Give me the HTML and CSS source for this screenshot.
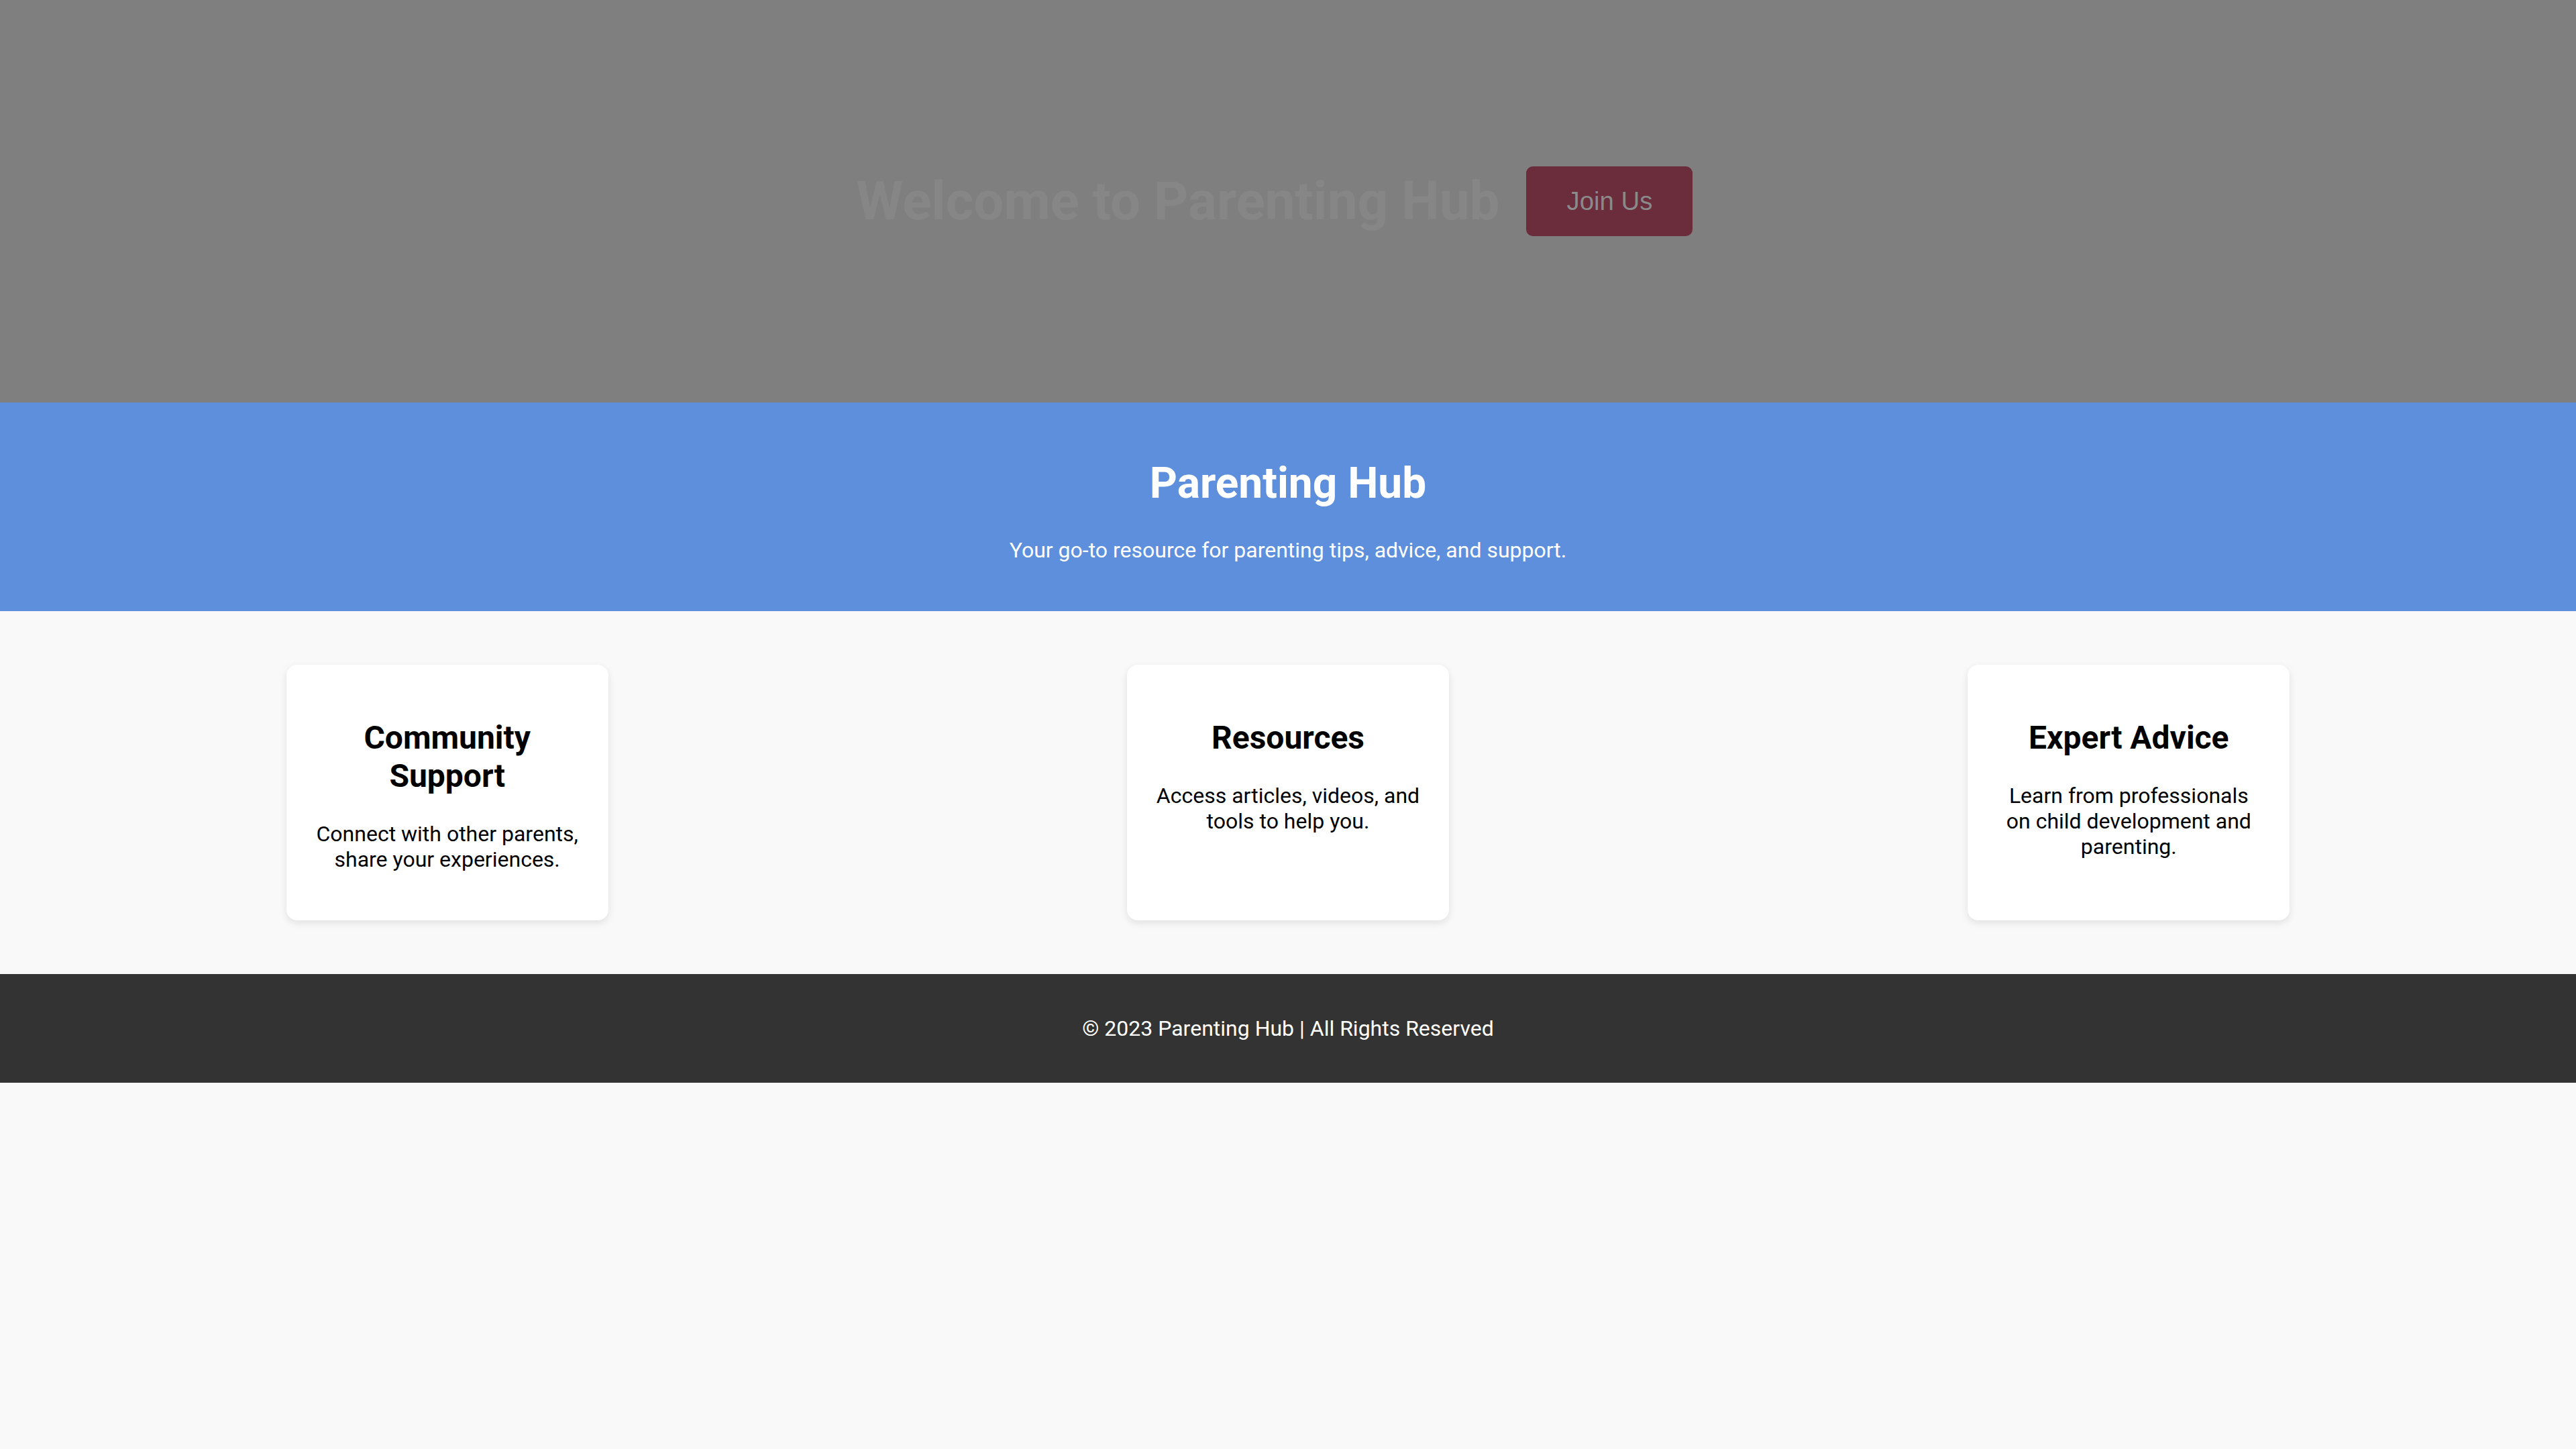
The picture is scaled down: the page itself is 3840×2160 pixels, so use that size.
FILE: index.html
```html
<!DOCTYPE html>
<html lang="en">
<head>
<meta charset="utf-8">
<title>Parenting Hub</title>
<link rel="stylesheet" href="styles.css">
</head>
<body>
<section class="hero">
  <h1 class="hero-title">Welcome to Parenting Hub</h1>
  <button class="join-btn">Join Us</button>
</section>
<header class="banner">
  <h1 class="banner-title">Parenting Hub</h1>
  <p class="banner-text">Your go-to resource for parenting tips, advice, and support.</p>
</header>
<main class="features">
  <div class="card">
    <h2 class="card-title">Community Support</h2>
    <p class="card-text">Connect with other parents, share your experiences.</p>
  </div>
  <div class="card">
    <h2 class="card-title">Resources</h2>
    <p class="card-text">Access articles, videos, and tools to help you.</p>
  </div>
  <div class="card">
    <h2 class="card-title">Expert Advice</h2>
    <p class="card-text">Learn from professionals on child development and parenting.</p>
  </div>
</main>
<footer class="footer">
  <p class="footer-text">© 2023 Parenting Hub | All Rights Reserved</p>
</footer>
</body>
</html>
```
FILE: styles.css
```css
html, body {
  margin: 0;
  padding: 0;
}
body {
  font-family: Roboto, "Liberation Sans", Arial, sans-serif;
  font-size: 32px;
  background: #f9f9f9;
  color: #000;
}
.hero {
  height: 600px;
  background: #7f7f7f;
  display: flex;
  justify-content: center;
  align-items: center;
}
.hero-title {
  font-size: 80px;
  font-weight: 700;
  margin: 53.6px 0;
  color: #868686;
}
.join-btn {
  margin: 40px;
  padding: 30px 60px;
  font-family: "Liberation Sans", Arial, sans-serif;
  font-size: 38.4px;
  border: none;
  border-radius: 10px;
  background: #6b2c3b;
  color: #8a8a8a;
}
.banner {
  background: #5e8fdc;
  color: #fff;
  text-align: center;
  padding: 40px;
}
.banner-title {
  font-size: 64px;
  font-weight: 700;
  margin: 42.9px 0;
}
.banner-text {
  font-size: 32px;
  margin: 32px 0;
}
.features {
  display: flex;
  justify-content: space-around;
  align-items: stretch;
  padding: 80px 40px;
}
.card {
  width: 400px;
  padding: 40px;
  background: #fff;
  border-radius: 16px;
  box-shadow: 0 4px 12px rgba(0, 0, 0, 0.1);
  text-align: center;
}
.card-title {
  font-size: 48px;
  font-weight: 700;
  margin: 39.84px 0;
}
.card-text {
  font-size: 32px;
  margin: 32px 0;
}
.footer {
  background: #333;
  color: #fff;
  text-align: center;
  padding: 62px 0;
}
.footer-text {
  margin: 0;
  font-size: 32px;
}
```
